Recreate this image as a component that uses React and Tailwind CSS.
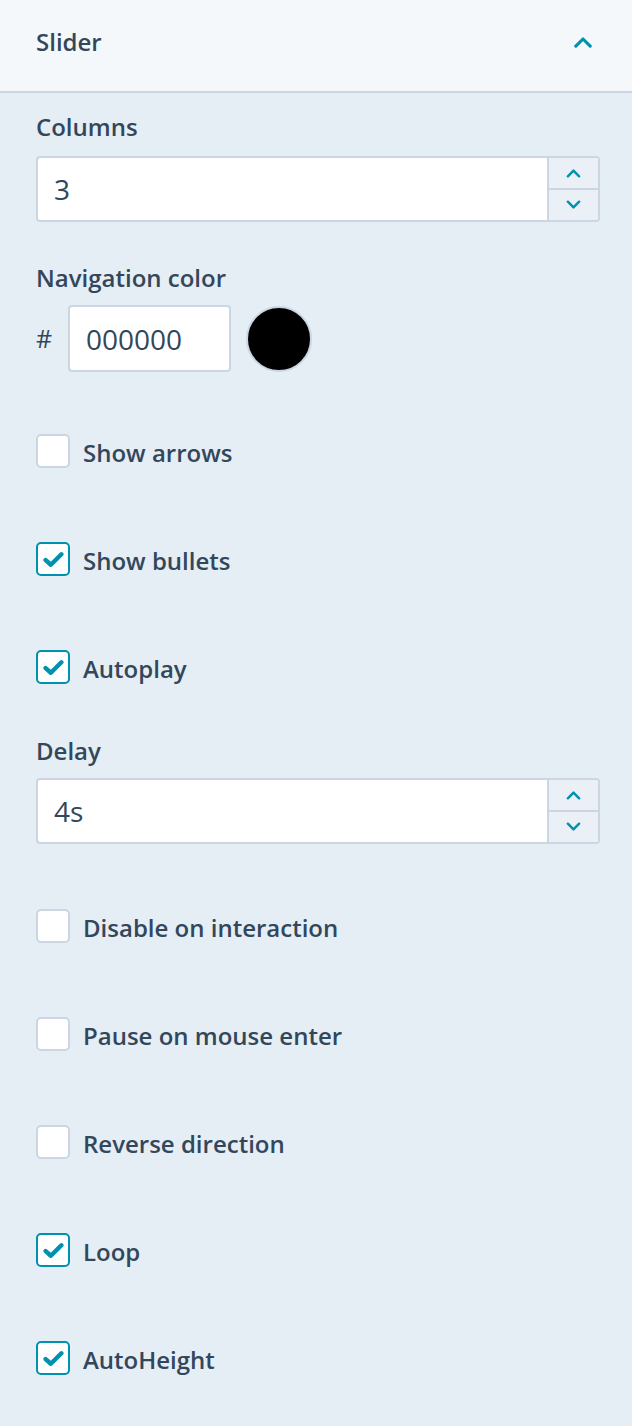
import React, { useState } from 'react';

const font = { fontFamily: '"Open Sans", "Liberation Sans", sans-serif' };

function Chevron({ up, className = '' }) {
  return (
    <svg viewBox="0 0 16 10" className={className} fill="none" stroke="currentColor" strokeWidth="2.6" strokeLinecap="round" strokeLinejoin="round">
      {up ? <path d="M2 8.5 L8 2.5 L14 8.5" /> : <path d="M2 1.5 L8 7.5 L14 1.5" />}
    </svg>
  );
}

function NumberField({ value }) {
  return (
    <div className="flex h-[66px] w-full rounded-[4px] border-2 border-[#cbd6e2] bg-white overflow-hidden">
      <div className="flex flex-1 items-center pl-[16px] text-[28px] text-[#33475b]">{value}</div>
      <div className="flex w-[51px] flex-col border-l-2 border-[#cbd6e2] bg-[#eaf0f6]">
        <button className="flex flex-1 items-center justify-center text-[#0091ae]">
          <Chevron up className="w-[15px] h-[10px]" />
        </button>
        <div className="h-[2px] bg-[#cbd6e2]" />
        <button className="flex flex-1 items-center justify-center text-[#0091ae]">
          <Chevron className="w-[15px] h-[10px]" />
        </button>
      </div>
    </div>
  );
}

function Check({ label, checked, onToggle }) {
  return (
    <label className="flex h-[34px] items-center gap-[13px] cursor-pointer" onClick={onToggle}>
      <span
        className={`flex h-[34px] w-[34px] shrink-0 items-center justify-center rounded-[5px] border-[2.5px] bg-white ${
          checked ? 'border-[#0091ae]' : 'border-[#cbd6e2]'
        }`}
      >
        {checked && (
          <svg viewBox="0 0 20 16" className="w-[21px] h-[17px]" fill="none" stroke="#0091ae" strokeWidth="4.2" strokeLinecap="round" strokeLinejoin="round">
            <path d="M2.5 8.5 L7.5 13 L17.5 3" />
          </svg>
        )}
      </span>
      <span className="pt-[3px] text-[24px] font-semibold text-[#33475b]">{label}</span>
    </label>
  );
}

export default function App() {
  const [opts, setOpts] = useState({
    arrows: false,
    bullets: true,
    autoplay: true,
    disable: false,
    pause: false,
    reverse: false,
    loop: true,
    autoHeight: true,
  });
  const toggle = (k) => (e) => {
    e.preventDefault();
    setOpts((o) => ({ ...o, [k]: !o[k] }));
  };

  return (
    <div className="min-h-[1426px] w-[632px] bg-[#e5edf5]" style={font}>
      <header className="flex h-[93px] items-center justify-between border-b-2 border-[#cbd6e2] bg-[#f5f8fa] pl-[36px] pr-[39px] pb-[7px]">
        <h2 className="text-[24px] font-semibold text-[#33475b]">Slider</h2>
        <Chevron up className="w-[20px] h-[12px] text-[#0091ae]" />
      </header>

      <div className="px-[36px] pt-[19px] pb-[49px] pr-[32px]">
        <div className="h-[30px] leading-[30px] text-[24px] font-semibold text-[#33475b]">Columns</div>
        <div className="mt-[14px]">
          <NumberField value="3" />
        </div>

        <div className="mt-[41px] h-[30px] leading-[30px] text-[24px] font-semibold text-[#33475b]">Navigation color</div>
        <div className="mt-[12px] flex items-center">
          <span className="w-[32px] text-[25px] text-[#33475b]">#</span>
          <div className="flex h-[67px] w-[163px] items-center rounded-[4px] border-2 border-[#cbd6e2] bg-white pl-[16px] text-[28px] text-[#33475b]">
            000000
          </div>
          <div className="ml-[15px] h-[66px] w-[66px] rounded-full border-2 border-[#cbd6e2] bg-black" />
        </div>

        <div className="mt-[62px] flex flex-col gap-[74px]">
          <Check label="Show arrows" checked={opts.arrows} onToggle={toggle('arrows')} />
          <Check label="Show bullets" checked={opts.bullets} onToggle={toggle('bullets')} />
          <Check label="Autoplay" checked={opts.autoplay} onToggle={toggle('autoplay')} />
        </div>

        <div className="mt-[52px] h-[30px] leading-[30px] text-[24px] font-semibold text-[#33475b]">Delay</div>
        <div className="mt-[12px]">
          <NumberField value="4s" />
        </div>

        <div className="mt-[65px] flex flex-col gap-[74px]">
          <Check label="Disable on interaction" checked={opts.disable} onToggle={toggle('disable')} />
          <Check label="Pause on mouse enter" checked={opts.pause} onToggle={toggle('pause')} />
          <Check label="Reverse direction" checked={opts.reverse} onToggle={toggle('reverse')} />
          <Check label="Loop" checked={opts.loop} onToggle={toggle('loop')} />
          <Check label="AutoHeight" checked={opts.autoHeight} onToggle={toggle('autoHeight')} />
        </div>
      </div>
    </div>
  );
}
